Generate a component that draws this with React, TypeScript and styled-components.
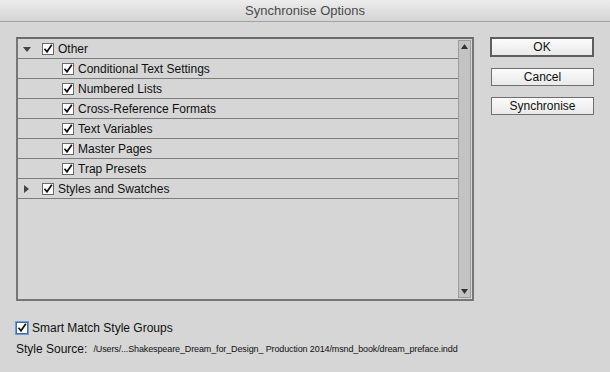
import styled, { createGlobalStyle } from "styled-components";

const GlobalStyle = createGlobalStyle`
  html, body {
    margin: 0;
    padding: 0;
    background: #d6d6d6;
  }
`;

const Window = styled.div`
  width: 610px;
  height: 372px;
  background: #d6d6d6;
  font-family: "Liberation Sans", Arial, sans-serif;
  font-size: 12px;
  color: #111;
  display: flex;
  flex-direction: column;
  overflow: hidden;
`;

const TitleBar = styled.div`
  height: 21px;
  display: flex;
  align-items: center;
  justify-content: center;
  background: linear-gradient(#ededed, #d4d4d4);
  border-bottom: 1px solid #a3a3a3;
  font-family: "Liberation Sans", Arial, sans-serif;
  font-size: 13px;
  color: #4a4a4a;
`;

const Body = styled.div`
  display: flex;
  padding: 15px 16px 0 16px;
`;

const ListBox = styled.div`
  width: 454px;
  height: 260px;
  border: 2px solid #767676;
  border-top-color: #6a6a6a;
  background: #d6d6d6;
  display: flex;
`;

const Rows = styled.div`
  flex: 1;
  display: flex;
  flex-direction: column;
`;

const Row = styled.div<{ $indent: number }>`
  height: 19px;
  box-sizing: border-box;
  height: 20px;
  padding-top: 1px;
  border-bottom: 1px solid #7c7c7c;
  display: flex;
  align-items: center;
  padding-left: ${(p) => p.$indent}px;
`;

const Disclosure = styled.span`
  width: 12px;
  display: flex;
  align-items: center;
  justify-content: flex-start;
  margin-right: 7px;
`;

const Label = styled.span`
  margin-left: 4px;
  white-space: nowrap;
`;

const Scrollbar = styled.div`
  width: 11px;
  margin: 1px 1px 1px 0;
  background: #c3c3c3;
  border: 1px solid #9c9c9c;
  display: flex;
  flex-direction: column;
  justify-content: space-between;
  align-items: center;
  padding: 3px 0;
`;

const Buttons = styled.div`
  margin-left: 16px;
  display: flex;
  flex-direction: column;
  gap: 10px;
`;

const Button = styled.button<{ $default?: boolean }>`
  height: ${(p) => (p.$default ? 20 : 18)}px;
  margin: ${(p) => (p.$default ? "0" : "1px 0 0 1px")};
  width: ${(p) => (p.$default ? 104 : 103)}px;
  border: ${(p) => (p.$default ? "2px solid #5e5e5e" : "1px solid #6f6f6f")};
  background: linear-gradient(#fbfbfb, #e9e9e9);
  font-family: "Liberation Sans", Arial, sans-serif;
  font-size: 12px;
  color: #111;
  padding: 0;
  border-radius: 0;
`;

const Footer = styled.div`
  padding: 20px 16px 0 16px;
  display: flex;
  flex-direction: column;
  gap: 7px;
`;

const FooterRow = styled.div`
  display: flex;
  align-items: center;
`;

const SourceLabel = styled.span`
  font-size: 12px;
`;

const SourcePath = styled.span`
  font-size: 9px;
  letter-spacing: -0.12px;
  margin-left: 6px;
  white-space: nowrap;
`;

const Box = styled.span<{ $focus?: boolean }>`
  width: 12px;
  height: 12px;
  box-sizing: border-box;
  background: #fff;
  border: 1px solid ${(p) => (p.$focus ? "#3d6fa8" : "#6b6b6b")};
  box-shadow: ${(p) => (p.$focus ? "0 0 0 1px #6f9bd0" : "none")};
  display: inline-flex;
  align-items: center;
  justify-content: center;
  flex-shrink: 0;
`;

const Check = ({ focus }: { focus?: boolean }) => (
  <Box $focus={focus}>
    <svg width="10" height="10" viewBox="0 0 10 10">
      <path d="M1.5 4.8 L4 7.8 L8.8 0.8" fill="none" stroke="#111" strokeWidth="1.7" />
    </svg>
  </Box>
);

const Triangle = ({ open }: { open: boolean }) => (
  <svg width="8" height="8" viewBox="0 0 8 8">
    {open ? <path d="M0 2 L8 2 L4 7 Z" fill="#444" /> : <path d="M1 0 L6 4 L1 8 Z" fill="#444" />}
  </svg>
);

const children = [
  "Conditional Text Settings",
  "Numbered Lists",
  "Cross-Reference Formats",
  "Text Variables",
  "Master Pages",
  "Trap Presets",
];

const App = () => {
  return (
    <Window>
      <GlobalStyle />
      <TitleBar>Synchronise Options</TitleBar>
      <Body>
        <ListBox>
          <Rows>
            <Row $indent={5}>
              <Disclosure>
                <Triangle open />
              </Disclosure>
              <Check />
              <Label>Other</Label>
            </Row>
            {children.map((c) => (
              <Row key={c} $indent={44}>
                <Check />
                <Label>{c}</Label>
              </Row>
            ))}
            <Row $indent={5}>
              <Disclosure>
                <Triangle open={false} />
              </Disclosure>
              <Check />
              <Label>Styles and Swatches</Label>
            </Row>
          </Rows>
          <Scrollbar>
            <svg width="7" height="5" viewBox="0 0 7 5">
              <path d="M3.5 0 L7 5 L0 5 Z" fill="#333" />
            </svg>
            <svg width="7" height="5" viewBox="0 0 7 5">
              <path d="M0 0 L7 0 L3.5 5 Z" fill="#333" />
            </svg>
          </Scrollbar>
        </ListBox>
        <Buttons>
          <Button $default>OK</Button>
          <Button>Cancel</Button>
          <Button>Synchronise</Button>
        </Buttons>
      </Body>
      <Footer>
        <FooterRow>
          <Check focus />
          <Label>Smart Match Style Groups</Label>
        </FooterRow>
        <FooterRow>
          <SourceLabel>Style Source:</SourceLabel>
          <SourcePath>/Users/...Shakespeare_Dream_for_Design_ Production 2014/msnd_book/dream_preface.indd</SourcePath>
        </FooterRow>
      </Footer>
    </Window>
  );
};

export default App;
